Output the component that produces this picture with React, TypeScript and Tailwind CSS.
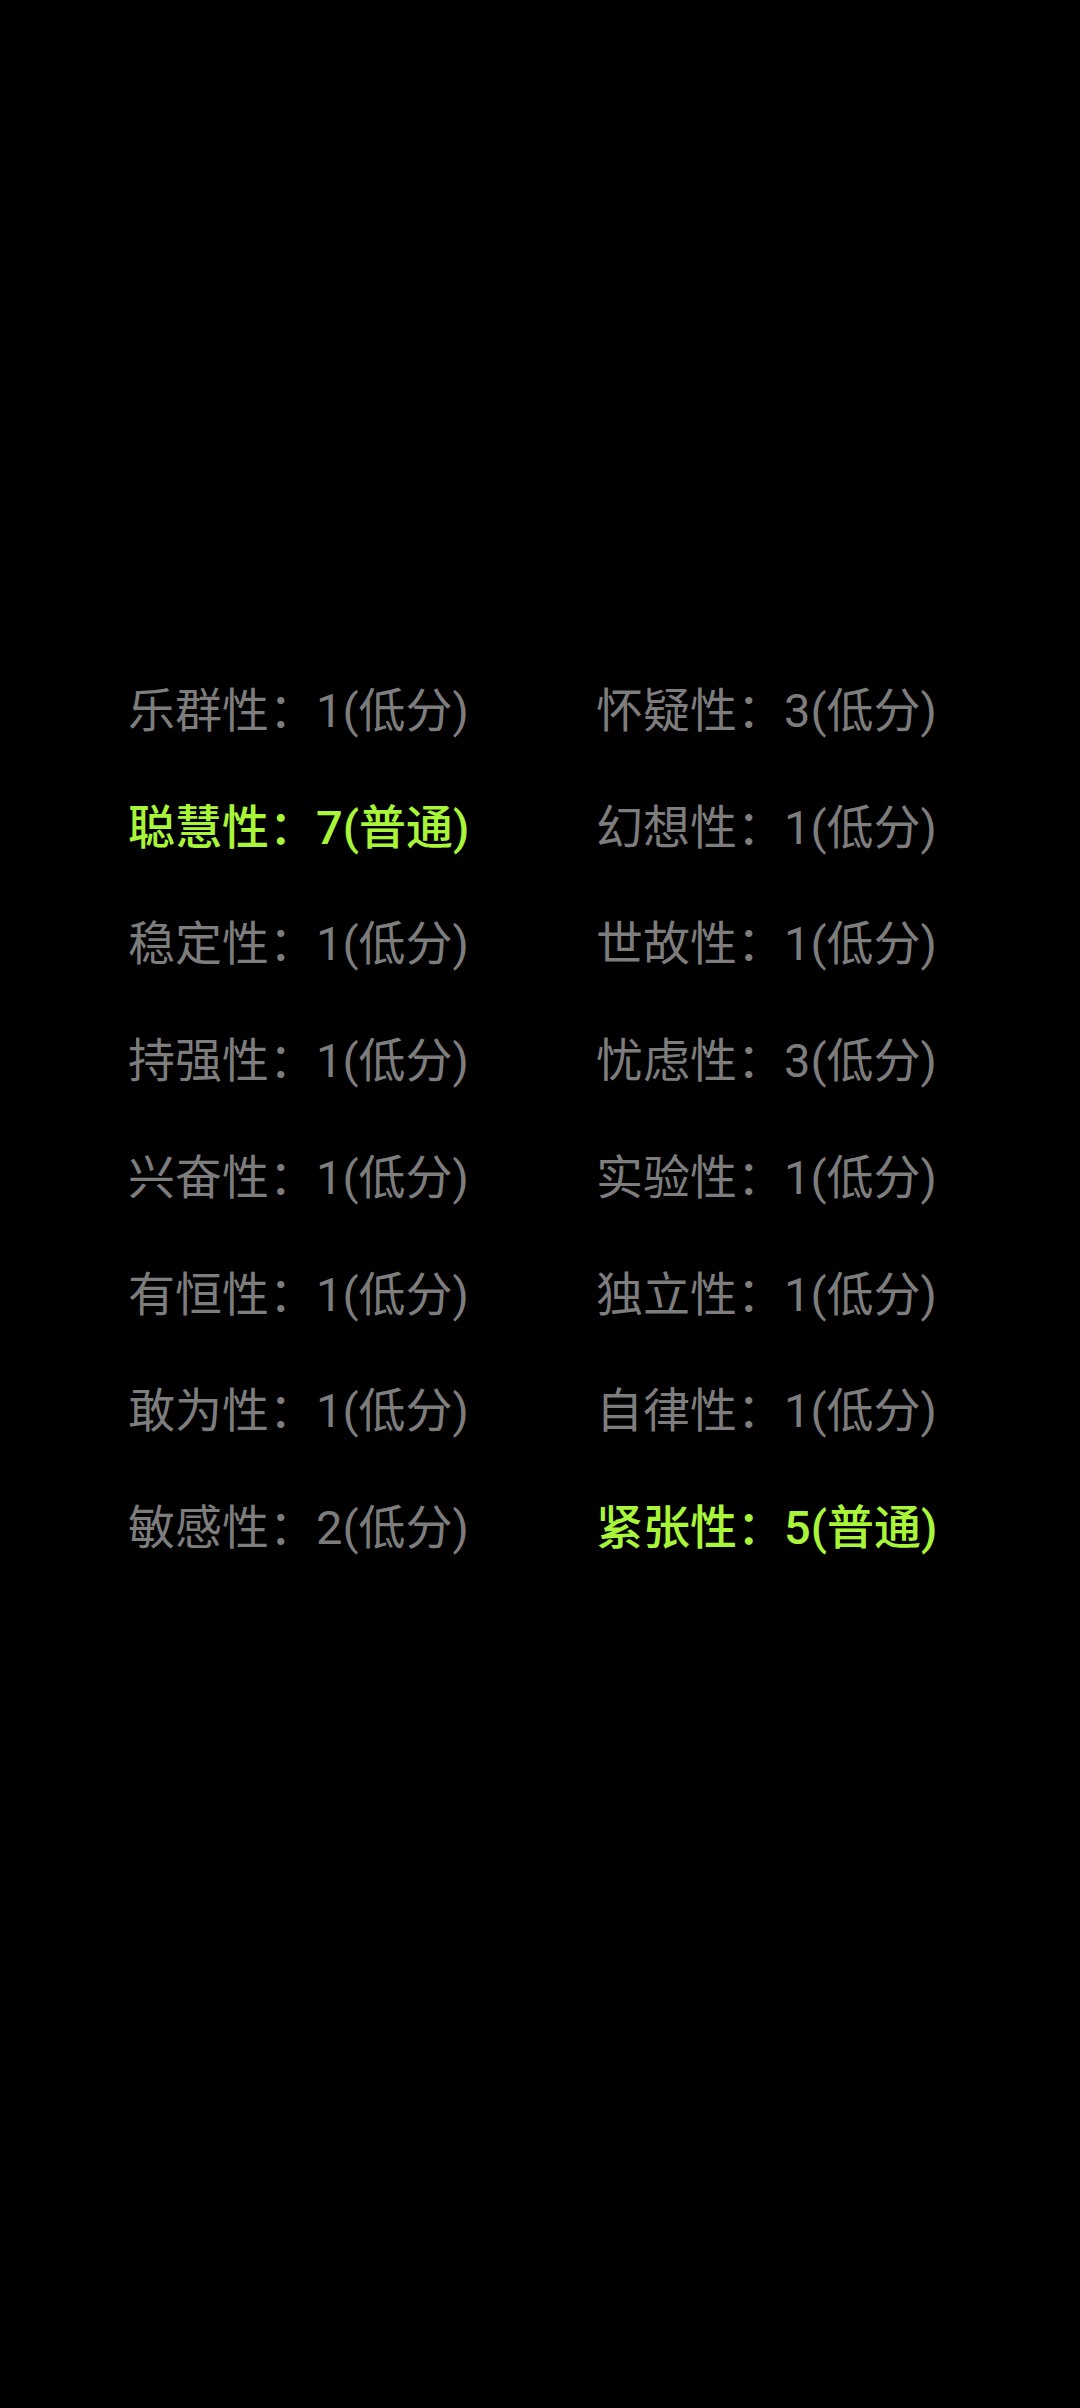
const rows: [string, string, boolean][] = [
  ['乐群性', '1(低分)', false],
  ['怀疑性', '3(低分)', false],
  ['聪慧性', '7(普通)', true],
  ['幻想性', '1(低分)', false],
  ['稳定性', '1(低分)', false],
  ['世故性', '1(低分)', false],
  ['持强性', '1(低分)', false],
  ['忧虑性', '3(低分)', false],
  ['兴奋性', '1(低分)', false],
  ['实验性', '1(低分)', false],
  ['有恒性', '1(低分)', false],
  ['独立性', '1(低分)', false],
  ['敢为性', '1(低分)', false],
  ['自律性', '1(低分)', false],
  ['敏感性', '2(低分)', false],
  ['紧张性', '5(普通)', true],
]

export default function App() {
  return (
    <div
      className="min-h-[2408px] w-[1080px] bg-black pt-[653px]"
      style={{ fontFamily: "Roboto, 'Noto Sans CJK SC', sans-serif" }}
    >
      <div className="ml-[128px] grid grid-cols-[468px_1fr] auto-rows-[116.7px]">
        {rows.map(([name, score, hi]) => (
          <div
            key={name}
            className={
              hi
                ? 'flex items-center text-[47px] font-medium text-[#a8f53a]'
                : 'flex items-center text-[47px] text-[#7d7d7d]'
            }
          >
            {name}：{score}
          </div>
        ))}
      </div>
    </div>
  )
}
